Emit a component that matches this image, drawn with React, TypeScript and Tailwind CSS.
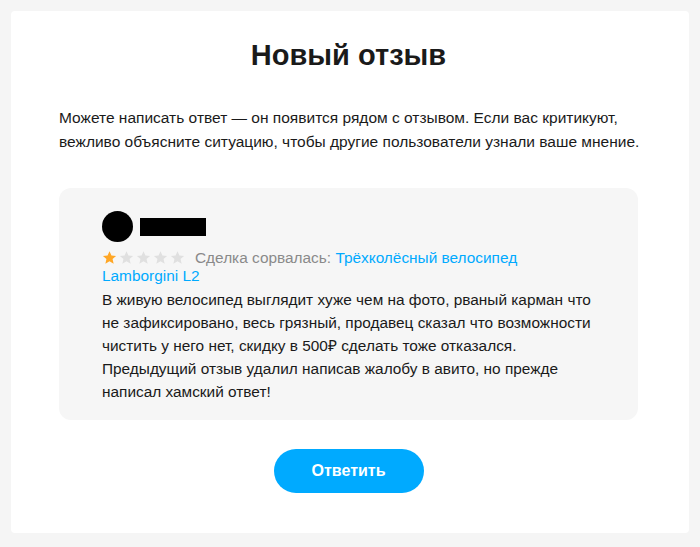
import React from "react";

function Star({ filled }: { filled: boolean }) {
  return (
    <svg viewBox="0 0 24 24" className="h-[15px] w-[15px] shrink-0" aria-hidden>
      <path
        d="M12 1.8l3.1 6.9 7.4.7-5.6 5 1.7 7.4L12 17.9l-6.6 3.9 1.7-7.4-5.6-5 7.4-.7z"
        fill={filled ? "#ffa726" : "#e0e0e0"}
      />
    </svg>
  );
}

export default function App() {
  return (
    <div
      className="min-h-[547px] bg-[#f5f5f5] p-[11px] text-[#1a1a1a]"
      style={{ fontFamily: '"Liberation Sans", Arial, sans-serif' }}
    >
      <div className="flex h-[522px] flex-col items-center rounded-[4px] bg-white pl-[48px] pr-[51px] pt-[24px]">
        {/* Header */}
        <h1 className="text-[29px] font-bold leading-[40px] text-[#1a1a1a]">
          Новый отзыв
        </h1>

        <p className="mt-[31px] w-full whitespace-nowrap text-[15.5px] leading-[24px]">
          Можете написать ответ — он появится рядом с отзывом. Если вас критикуют,
          <br />
          вежливо объясните ситуацию, чтобы другие пользователи узнали ваше мнение.
        </p>

        {/* Review */}
        <div className="mt-[34px] h-[232px] w-full rounded-[12px] bg-[#f6f6f6] pl-[43px] pt-[23px]">
          <div className="flex items-center gap-[7px]">
            <div className="h-[31px] w-[31px] rounded-full bg-black" />
            <div className="h-[18px] w-[66px] bg-black" />
          </div>

          <div className="mt-[6px] whitespace-nowrap text-[15.4px] leading-[18px]">
            <span className="mr-[10px] inline-flex translate-y-[2px] gap-[2px]">
              <Star filled />
              <Star filled={false} />
              <Star filled={false} />
              <Star filled={false} />
              <Star filled={false} />
            </span>
            <span className="text-[#8a8a8a]">Сделка сорвалась: </span>
            <span className="text-[#00aaff]">
              Трёхколёсный велосипед
              <br />
              Lamborgini L2
            </span>
          </div>

          <p className="mt-[3px] whitespace-nowrap text-[15.4px] leading-[23px]">
            В живую велосипед выглядит хуже чем на фото, рваный карман что
            <br />
            не зафиксировано, весь грязный, продавец сказал что возможности
            <br />
            чистить у него нет, скидку в 500₽ сделать тоже отказался.
            <br />
            Предыдущий отзыв удалил написав жалобу в авито, но прежде
            <br />
            написал хамский ответ!
          </p>
        </div>

        <button className="mt-[29px] h-[44px] w-[150px] rounded-full bg-[#00aaff] text-[16px] font-bold text-white">
          Ответить
        </button>
      </div>
    </div>
  );
}
